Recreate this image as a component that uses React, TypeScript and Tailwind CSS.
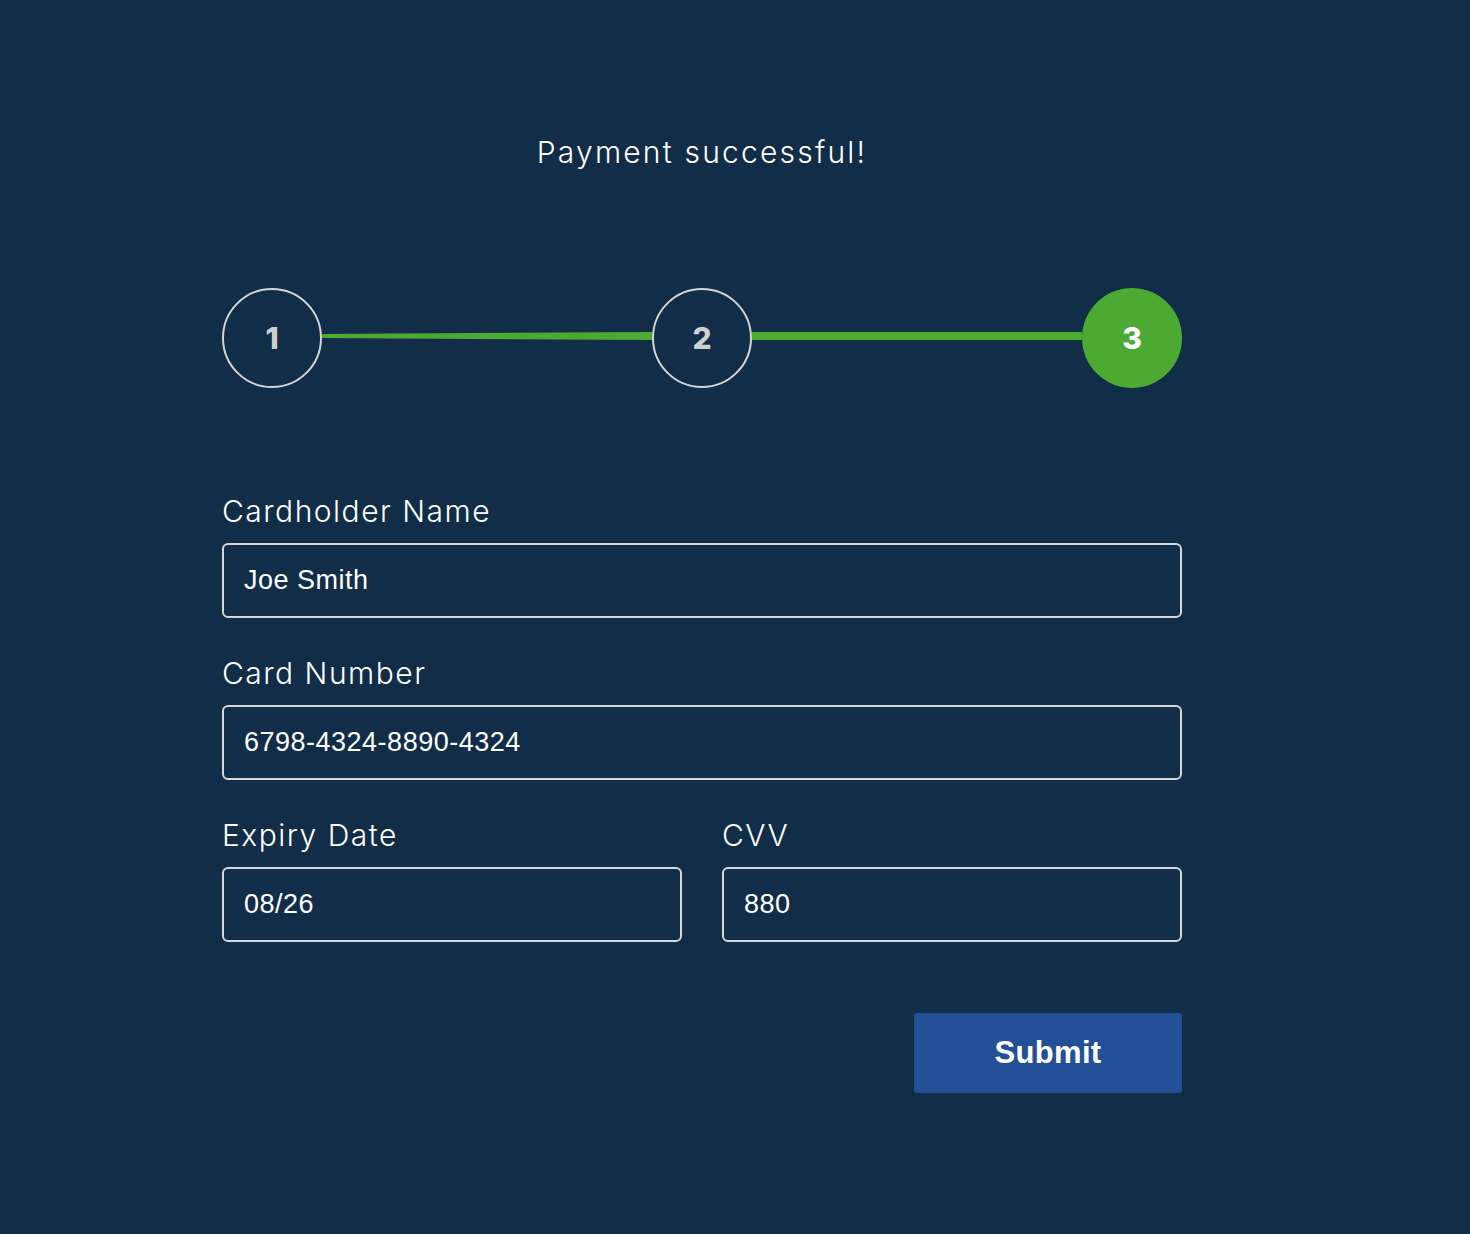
import { useState } from 'react';

type Field = {
    label: string;
    value: string;
};

function Step({ n, done }: { n: number; done?: boolean }) {
    return (
        <div
            className={
                done
                    ? 'flex h-[100px] w-[100px] shrink-0 items-center justify-center rounded-full bg-[#4caa32] text-[30px] font-extrabold text-white [font-family:Inter,sans-serif]'
                    : 'flex h-[100px] w-[100px] shrink-0 items-center justify-center rounded-full border-2 border-[#d4d4d4] text-[30px] font-extrabold text-[#d0d0d0] [font-family:Inter,sans-serif]'
            }
        >
            {n}
        </div>
    );
}

function Input({ label, value, onChange }: Field & { onChange: (v: string) => void }) {
    return (
        <label className="flex flex-col">
            <span className="mb-[14px] text-[30px] leading-[36px] font-light tracking-[1.5px] text-white [font-family:Inter,'Open_Sans',sans-serif]">
                {label}
            </span>
            <input
                value={value}
                onChange={(e) => onChange(e.target.value)}
                className="h-[75px] w-full rounded-[6px] border-2 border-[#d6d6d6] bg-transparent px-[20px] text-[27px] tracking-[0.5px] text-white outline-none [font-family:'Liberation_Sans',Arial,sans-serif]"
            />
        </label>
    );
}

export default function App() {
    const [name, setName] = useState('Joe Smith');
    const [card, setCard] = useState('6798-4324-8890-4324');
    const [expiry, setExpiry] = useState('08/26');
    const [cvv, setCvv] = useState('880');

    return (
        <div className="min-h-[1234px] w-full bg-[#112d47]">
            <div className="ml-[222px] flex w-[960px] flex-col pb-[141px]">
                <h1 className="mt-[134px] text-center text-[30px] leading-[36px] font-light tracking-[2.2px] text-white [font-family:Inter,'Open_Sans',sans-serif]">
                    Payment successful!
                </h1>

                <div className="mt-[118px] flex items-center">
                    <Step n={1} />
                    <div className="mb-[4px] h-[8px] flex-1 bg-[#4caa32] [clip-path:polygon(0_25%,100%_0,100%_100%,0_75%)]" />
                    <Step n={2} />
                    <div className="mb-[4px] h-[8px] flex-1 bg-[#4caa32]" />
                    <Step n={3} done />
                </div>

                <div className="mt-[105px] flex flex-col gap-[37px]">
                    <Input label="Cardholder Name" value={name} onChange={setName} />
                    <Input label="Card Number" value={card} onChange={setCard} />
                    <div className="grid grid-cols-2 gap-[40px]">
                        <Input label="Expiry Date" value={expiry} onChange={setExpiry} />
                        <Input label="CVV" value={cvv} onChange={setCvv} />
                    </div>
                </div>

                <div className="mt-[71px] flex justify-end">
                    <button
                        type="button"
                        className="h-[80px] w-[268px] rounded-[3px] bg-[#224f96] text-[31px] font-bold tracking-[0.3px] text-white [font-family:'Liberation_Sans',Arial,sans-serif]"
                    >
                        Submit
                    </button>
                </div>
            </div>
        </div>
    );
}
